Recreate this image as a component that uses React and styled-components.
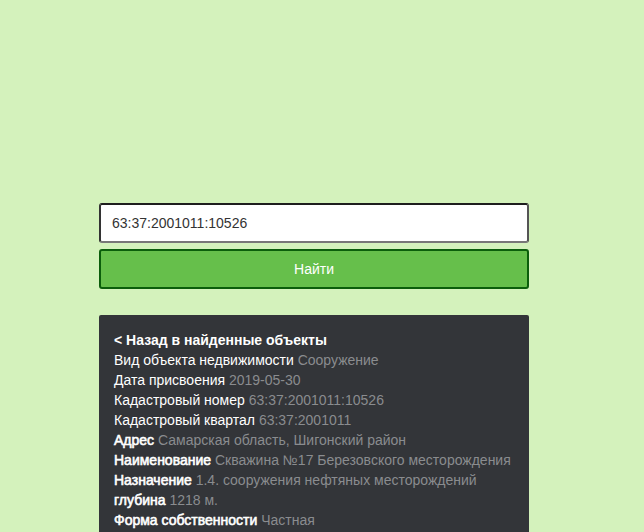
import React from "react";
import styled, { createGlobalStyle } from "styled-components";

const Global = createGlobalStyle`
  html, body { margin: 0; padding: 0; }
  body {
    background: #d4f2bc;
    font-family: "Liberation Sans", Arial, sans-serif;
    font-size: 14px;
    height: 532px;
    overflow: hidden;
  }
`;

const Page = styled.div`
  padding: 203px 0 0 99px;
`;

const Column = styled.div`
  width: 430px;
  display: flex;
  flex-direction: column;
`;

const SearchInput = styled.input`
  box-sizing: border-box;
  height: 40px;
  width: 100%;
  border: 2px solid #1e1e1e;
  border-bottom-color: #777;
  border-left-color: #333;
  border-right-color: #555;
  border-radius: 3px;
  background: #fff;
  padding: 0 11px;
  font-family: inherit;
  font-size: 14px;
  color: #333;
  outline: none;
`;

const SearchButton = styled.button`
  box-sizing: border-box;
  margin-top: 6px;
  height: 40px;
  width: 100%;
  background: #66bf4b;
  border: 2px solid #0b5e0b;
  border-radius: 3px;
  color: #fff;
  font-family: inherit;
  font-size: 14px;
`;

const Panel = styled.div`
  margin-top: 26px;
  background: #333539;
  border-radius: 2px;
  padding: 15px 12px 15px 15px;
  color: #fff;
  line-height: 20px;
`;

const Back = styled.div`
  font-weight: bold;
`;

const Row = styled.div``;

const Label = styled.span`
  color: #fff;
  -webkit-text-stroke: ${(p) => (p.$bold ? "0.6px #fff" : "0")};
`;

const Value = styled.span`
  color: #8a8c8f;
`;

const rows = [
  ["Вид объекта недвижимости", "Сооружение", false],
  ["Дата присвоения", "2019-05-30", false],
  ["Кадастровый номер", "63:37:2001011:10526", false],
  ["Кадастровый квартал", "63:37:2001011", false],
  ["Адрес", "Самарская область, Шигонский район", true],
  ["Наименование", "Скважина №17 Березовского месторождения", true],
  ["Назначение", "1.4. сооружения нефтяных месторождений", true],
  ["глубина", "1218 м.", true],
  ["Форма собственности", "Частная", true],
];

export default function App() {
  return (
    <>
      <Global />
      <Page>
        <Column>
          <SearchInput defaultValue="63:37:2001011:10526" />
          <SearchButton>Найти</SearchButton>
          <Panel>
            <Back>&lt; Назад в найденные объекты</Back>
            {rows.map(([l, v, b]) => (
              <Row key={l}>
                <Label $bold={b}>{l}</Label> <Value>{v}</Value>
              </Row>
            ))}
          </Panel>
        </Column>
      </Page>
    </>
  );
}
